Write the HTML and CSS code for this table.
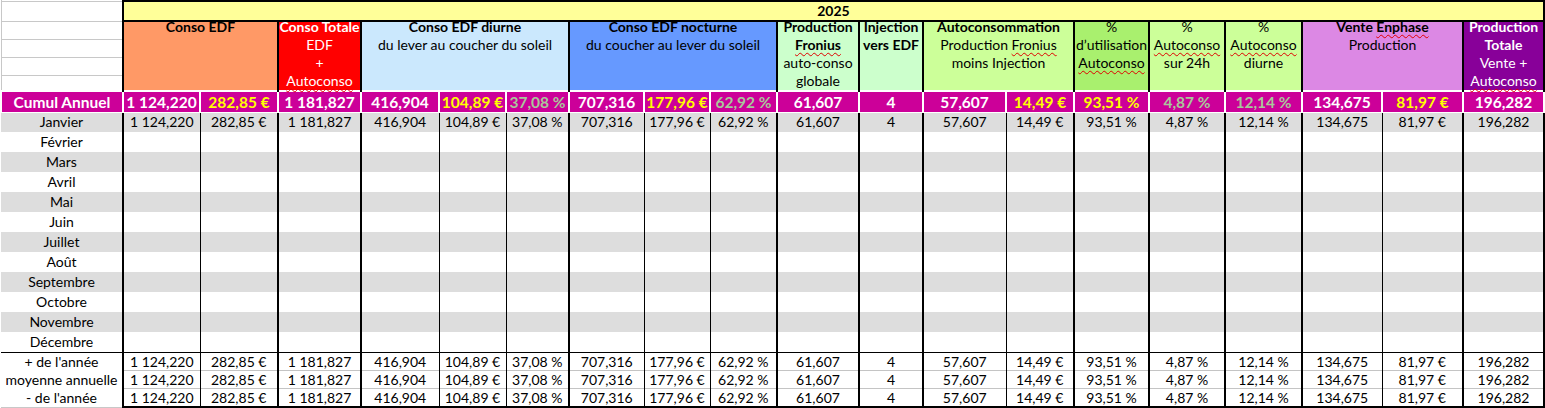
FILE: index.html
```html
<!DOCTYPE html>
<html lang="fr">
<head>
<meta charset="utf-8">
<title>Conso 2025</title>
<link rel="stylesheet" href="styles.css">
</head>
<body>
<table class="sheet">
<colgroup>
<col class="w122"><col class="w77"><col class="w78"><col class="w83"><col class="w78"><col class="w67"><col class="w63"><col class="w75"><col class="w66"><col class="w67"><col class="w82"><col class="w64"><col class="w83"><col class="w68"><col class="w75"><col class="w76"><col class="w77"><col class="w80"><col class="w81"><col class="w81"><col class="w60">
</colgroup>
<tbody>
<tr class="r-strip"><td class="lab"></td><td colspan="19"></td><td class="ext"></td></tr>
<tr class="r-year"><td class="lab"></td><td colspan="19" class="year">2025</td><td class="ext"></td></tr>
<tr class="r-h">
<td class="lab"></td>
<td colspan="2" rowspan="4" class="hd bg-orange"><div class="hc"><span class="ln b">Conso EDF</span></div></td>
<td rowspan="4" class="hd bg-red light"><div class="hc"><span class="ln b">Conso Totale</span><span class="ln">EDF</span><span class="ln">+</span><span class="ln"><span class="sq">Autoconso</span></span></div></td>
<td colspan="3" rowspan="4" class="hd bg-sky"><div class="hc"><span class="ln b">Conso EDF diurne</span><span class="ln">du lever au coucher du soleil</span></div></td>
<td colspan="3" rowspan="4" class="hd bg-blue"><div class="hc"><span class="ln b">Conso EDF nocturne</span><span class="ln">du coucher au lever du soleil</span></div></td>
<td rowspan="4" class="hd bg-mint"><div class="hc"><span class="ln b">Production</span><span class="ln b"><span class="sq">Fronius</span></span><span class="ln">auto-conso</span><span class="ln">globale</span></div></td>
<td rowspan="4" class="hd bg-mint"><div class="hc"><span class="ln b">Injection</span><span class="ln b">vers EDF</span></div></td>
<td colspan="2" rowspan="4" class="hd bg-lime"><div class="hc"><span class="ln b">Autoconsommation</span><span class="ln">Production <span class="sq">Fronius</span></span><span class="ln">moins Injection</span></div></td>
<td rowspan="4" class="hd bg-green"><div class="hc"><span class="ln">%</span><span class="ln">d’utilisation</span><span class="ln"><span class="sq">Autoconso</span></span></div></td>
<td rowspan="4" class="hd bg-lime"><div class="hc"><span class="ln">%</span><span class="ln"><span class="sq">Autoconso</span></span><span class="ln">sur 24h</span></div></td>
<td rowspan="4" class="hd bg-lime"><div class="hc"><span class="ln">%</span><span class="ln"><span class="sq">Autoconso</span></span><span class="ln">diurne</span></div></td>
<td colspan="2" rowspan="4" class="hd bg-violet"><div class="hc"><span class="ln b">Vente <span class="sq">Enphase</span></span><span class="ln">Production</span></div></td>
<td rowspan="4" class="hd bg-purple light"><div class="hc"><span class="ln b">Production</span><span class="ln b">Totale</span><span class="ln">Vente +</span><span class="ln"><span class="sq">Autoconso</span></span></div></td>
<td class="ext"></td>
</tr>
<tr class="r-h"><td class="lab"></td><td class="ext"></td></tr>
<tr class="r-h"><td class="lab"></td><td class="ext"></td></tr>
<tr class="r-h r-h4"><td class="lab"></td><td class="ext"></td></tr>

<tr class="cu">
<td>Cumul Annuel</td><td>1 124,220</td><td class="y">282,85 €</td><td>1 181,827</td><td>416,904</td><td class="y">104,89 €</td><td class="sg">37,08 %</td><td>707,316</td><td class="y">177,96 €</td><td class="sg">62,92 %</td><td>61,607</td><td>4</td><td>57,607</td><td class="y">14,49 €</td><td class="y">93,51 %</td><td class="sg">4,87 %</td><td class="sg">12,14 %</td><td>134,675</td><td class="y">81,97 €</td><td>196,282</td><td class="blank"></td>
</tr>

<tr class="dr m gr"><td>Janvier</td><td>1 124,220</td><td>282,85 €</td><td>1 181,827</td><td>416,904</td><td>104,89 €</td><td>37,08 %</td><td>707,316</td><td>177,96 €</td><td>62,92 %</td><td>61,607</td><td>4</td><td>57,607</td><td>14,49 €</td><td>93,51 %</td><td>4,87 %</td><td>12,14 %</td><td>134,675</td><td>81,97 €</td><td>196,282</td><td></td></tr>
<tr class="dr m"><td>Février</td><td></td><td></td><td></td><td></td><td></td><td></td><td></td><td></td><td></td><td></td><td></td><td></td><td></td><td></td><td></td><td></td><td></td><td></td><td></td><td></td></tr>
<tr class="dr m gr"><td>Mars</td><td></td><td></td><td></td><td></td><td></td><td></td><td></td><td></td><td></td><td></td><td></td><td></td><td></td><td></td><td></td><td></td><td></td><td></td><td></td><td></td></tr>
<tr class="dr m"><td>Avril</td><td></td><td></td><td></td><td></td><td></td><td></td><td></td><td></td><td></td><td></td><td></td><td></td><td></td><td></td><td></td><td></td><td></td><td></td><td></td><td></td></tr>
<tr class="dr m gr"><td>Mai</td><td></td><td></td><td></td><td></td><td></td><td></td><td></td><td></td><td></td><td></td><td></td><td></td><td></td><td></td><td></td><td></td><td></td><td></td><td></td><td></td></tr>
<tr class="dr m"><td>Juin</td><td></td><td></td><td></td><td></td><td></td><td></td><td></td><td></td><td></td><td></td><td></td><td></td><td></td><td></td><td></td><td></td><td></td><td></td><td></td><td></td></tr>
<tr class="dr m gr"><td>Juillet</td><td></td><td></td><td></td><td></td><td></td><td></td><td></td><td></td><td></td><td></td><td></td><td></td><td></td><td></td><td></td><td></td><td></td><td></td><td></td><td></td></tr>
<tr class="dr m"><td>Août</td><td></td><td></td><td></td><td></td><td></td><td></td><td></td><td></td><td></td><td></td><td></td><td></td><td></td><td></td><td></td><td></td><td></td><td></td><td></td><td></td></tr>
<tr class="dr m gr"><td>Septembre</td><td></td><td></td><td></td><td></td><td></td><td></td><td></td><td></td><td></td><td></td><td></td><td></td><td></td><td></td><td></td><td></td><td></td><td></td><td></td><td></td></tr>
<tr class="dr m"><td>Octobre</td><td></td><td></td><td></td><td></td><td></td><td></td><td></td><td></td><td></td><td></td><td></td><td></td><td></td><td></td><td></td><td></td><td></td><td></td><td></td><td></td></tr>
<tr class="dr m gr"><td>Novembre</td><td></td><td></td><td></td><td></td><td></td><td></td><td></td><td></td><td></td><td></td><td></td><td></td><td></td><td></td><td></td><td></td><td></td><td></td><td></td><td></td></tr>
<tr class="dr m"><td>Décembre</td><td></td><td></td><td></td><td></td><td></td><td></td><td></td><td></td><td></td><td></td><td></td><td></td><td></td><td></td><td></td><td></td><td></td><td></td><td></td><td></td></tr>

<tr class="dr br br-first"><td>+ de l'année</td><td>1 124,220</td><td>282,85 €</td><td>1 181,827</td><td>416,904</td><td>104,89 €</td><td>37,08 %</td><td>707,316</td><td>177,96 €</td><td>62,92 %</td><td>61,607</td><td>4</td><td>57,607</td><td>14,49 €</td><td>93,51 %</td><td>4,87 %</td><td>12,14 %</td><td>134,675</td><td>81,97 €</td><td>196,282</td><td></td></tr>
<tr class="dr br"><td>moyenne annuelle</td><td>1 124,220</td><td>282,85 €</td><td>1 181,827</td><td>416,904</td><td>104,89 €</td><td>37,08 %</td><td>707,316</td><td>177,96 €</td><td>62,92 %</td><td>61,607</td><td>4</td><td>57,607</td><td>14,49 €</td><td>93,51 %</td><td>4,87 %</td><td>12,14 %</td><td>134,675</td><td>81,97 €</td><td>196,282</td><td></td></tr>
<tr class="dr br br-last"><td>- de l'année</td><td>1 124,220</td><td>282,85 €</td><td>1 181,827</td><td>416,904</td><td>104,89 €</td><td>37,08 %</td><td>707,316</td><td>177,96 €</td><td>62,92 %</td><td>61,607</td><td>4</td><td>57,607</td><td>14,49 €</td><td>93,51 %</td><td>4,87 %</td><td>12,14 %</td><td>134,675</td><td>81,97 €</td><td>196,282</td><td></td></tr>
</tbody>
</table>
</body>
</html>
```

FILE: styles.css
```css
html, body {
  margin: 0;
  padding: 0;
  background: #fff;
}
body {
  width: 1545px;
  height: 408px;
  overflow: hidden;
  font-family: Lato, "Carlito", "Open Sans", sans-serif;
  font-size: 14px;
  color: #000;
}

.sheet {
  border-collapse: collapse;
  table-layout: fixed;
  width: 1603px;
}
.sheet td {
  padding: 0;
  text-align: center;
  white-space: nowrap;
  overflow: hidden;
  line-height: 18px;
}

.w122 { width: 122px; }
.w77 { width: 77px; }
.w78 { width: 78px; }
.w83 { width: 83px; }
.w67 { width: 67px; }
.w63 { width: 63px; }
.w75 { width: 75px; }
.w66 { width: 66px; }
.w82 { width: 82px; }
.w64 { width: 64px; }
.w68 { width: 68px; }
.w76 { width: 76px; }
.w80 { width: 80px; }
.w81 { width: 81px; }
.w60 { width: 60px; }

/* grid lines of the spreadsheet (outside the table borders) */
.lab, .ext {
  border-bottom: 1px solid #c8c8c8;
}
.lab {
  border-left: 1px solid #c8c8c8;
}

.r-strip { height: 1px; }
.r-strip td { line-height: 0; }

.r-year { height: 17px; }
.year {
  background: #ffff99;
  border: 2px solid #000;
  font-weight: 700;
  font-size: 14px;
  line-height: 15px;
  vertical-align: top;
}

.r-h { height: 18px; }
.r-h4 { height: 15px; }

.hd {
  border: 2px solid #000;
  border-bottom: 0;
  vertical-align: top;
  overflow: visible !important;
}
.hc {
  display: flex;
  flex-direction: column;
  align-items: center;
  margin-top: -4px;
}
.ln {
  display: block;
  line-height: 18px;
  white-space: nowrap;
}
.b { font-weight: 700; }
.light { color: #fff; }
.sq {
  text-decoration: underline wavy #e00000;
  text-decoration-thickness: 1px;
  text-decoration-skip-ink: none;
  text-underline-offset: 2px;
}

.bg-orange { background: #ff9966; }
.bg-red { background: #ff0000; }
.bg-sky { background: #cbe8fd; }
.bg-blue { background: #6699ff; }
.bg-mint { background: #ccffcc; }
.bg-lime { background: #ccff99; }
.bg-green { background: #a9f06e; }
.bg-violet { background: #dc88e4; }
.bg-purple { background: #880099; }

/* Cumul annuel */
.cu { height: 21px; }
.cu td {
  background: #cc0099;
  color: #fff;
  font-weight: 700;
  font-size: 15.5px;
  line-height: 18px;
  border: 2px solid #fff;
  border-bottom-width: 1px;
}
.cu td.y { color: #ffff00; }
.cu td.sg { color: #a9c79b; }
.cu td.blank { background: #fff; }

/* data rows */
.dr td {
  border-left: 2px solid #000;
  line-height: 18px;
}
.dr td:first-child { border-left: 0; }
.dr td:nth-child(3),
.dr td:nth-child(6),
.dr td:nth-child(7),
.dr td:nth-child(9),
.dr td:nth-child(10),
.dr td:nth-child(14),
.dr td:nth-child(19) {
  border-left-width: 1px;
}

.m { height: 20px; }
.m td { background: #fff; }
.m.gr td { background: #dddddd; }

.br { height: 18px; }
.br td {
  background: #fff;
  border-top: 1px solid #c4c4c4;
  line-height: 17px;
}
.br td:first-child { border-top: 0; }
.br-first td,
.br-first td:first-child { border-top: 1px solid #000; }
.br-last { height: 19px; }
.br-last td { border-bottom: 2px solid #000; }
.br-last td:first-child { border-bottom: 1px solid #c8c8c8; }
```
